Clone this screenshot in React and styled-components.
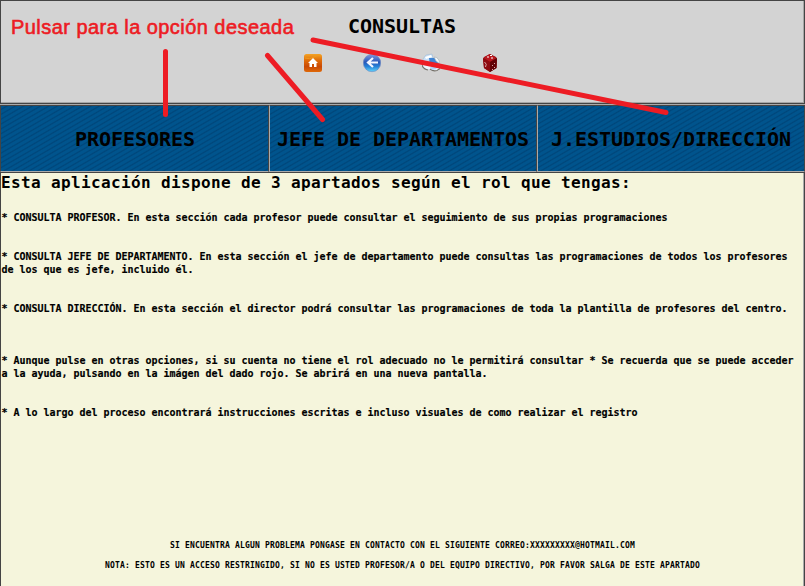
import React from "react";
import styled, { createGlobalStyle } from "styled-components";

const GlobalStyle = createGlobalStyle`
  * { box-sizing: border-box; }
  body { margin: 0; overflow: hidden; background: #f5f5dc; }
`;

const Page = styled.div`
  position: relative;
  width: 805px;
  height: 586px;
  display: flex;
  flex-direction: column;
  overflow: hidden;
  color: #000;
  font-family: "DejaVu Sans Mono", monospace;
  font-weight: 700;
`;

const Header = styled.header`
  height: 104px;
  flex: none;
  display: flex;
  flex-direction: column;
  align-items: center;
  background: #d3d3d3;
  border: 1px solid #444;
  box-shadow: inset -1px -1px #a6a6a6;
`;

const Title = styled.h1`
  margin: 13px 0 0;
  padding-right: 1px;
  font-size: 20px;
  line-height: 24px;
  letter-spacing: -0.04px;
`;

const Toolbar = styled.nav`
  display: flex;
  gap: 41px;
  margin-top: 15px;
  height: 20px;
  padding-right: 3px;
`;

const Icon = styled.svg`
  display: block;
  width: 18px;
  height: 20px;
`;

const Tabs = styled.nav`
  flex: none;
  height: 68px;
  display: grid;
  grid-template-columns: 269px 268px 268px;
  border-top: 1px solid #aaa;
`;

const Tab = styled.a`
  display: flex;
  align-items: center;
  justify-content: center;
  padding-left: ${(p) => (p.$first ? "1px" : "0")};
  white-space: nowrap;
  font-size: 20px;
  letter-spacing: -0.04px;
  border: 1px solid #444;
  border-left-color: ${(p) => (p.$first ? "#444" : "#aaa")};
  border-bottom-color: #aaa;
  background: repeating-linear-gradient(150deg, #00548d 0 1.8px, #00467a 3px, #00548d 4.2px);
`;

const Content = styled.main`
  flex: 1;
  display: flex;
  flex-direction: column;
  background: #f5f5dc;
  border: solid #444;
  border-width: 1px 1px 0;
  box-shadow: inset -1px 0 #aaa;
`;

const Intro = styled.h2`
  margin: 0;
  font-size: 16px;
  line-height: 19px;
  letter-spacing: 0.368px;
`;

const Notes = styled.section`
  padding: 19px 0 0 0.5px;
  font-size: 10px;
  line-height: 13px;
  letter-spacing: -0.02px;
  -webkit-text-stroke: 0.15px #000;
`;

const Note = styled.p`
  margin: 0 0 ${(p) => p.$gap || 26}px;
`;

const Footer = styled.footer`
  margin-top: auto;
  padding-bottom: 10px;
  text-align: center;
  font-size: 8px;
  line-height: 20px;
  letter-spacing: 0.184px;
`;

const FootLine = styled.div`
  white-space: nowrap;
`;

const Annotation = styled.div`
  position: absolute;
  left: 11px;
  top: 15px;
  color: #ed1c24;
  font: 400 20px/24px "Liberation Sans", Arial, sans-serif;
  letter-spacing: 0.45px;
  -webkit-text-stroke: 0.6px #ed1c24;
  white-space: nowrap;
`;

const Pointers = styled.svg`
  position: absolute;
  inset: 0;
  pointer-events: none;
`;

const HomeIcon = () => (
  <Icon viewBox="0 0 18 20">
    <defs>
      <linearGradient id="home" x2="0" y2="1">
        <stop stopColor="#f3a326" /><stop offset=".35" stopColor="#e06c08" />
        <stop offset=".7" stopColor="#c94905" /><stop offset="1" stopColor="#df6908" />
      </linearGradient>
    </defs>
    <rect y="1" width="18" height="18" rx="2.5" fill="url(#home)" />
    <path d="M1 5q5 2 9-1t7-1" stroke="#ef9a1c" fill="none" />
    <path d="m9 5-5 5h1.500v4H8v-3h2v3h2.500v-4H14z" fill="#fff" />
  </Icon>
);

const BackIcon = () => (
  <Icon viewBox="0 0 18 20">
    <defs>
      <linearGradient id="back" x2="0" y2="1">
        <stop stopColor="#8299dc" /><stop offset=".45" stopColor="#2858b9" />
        <stop offset=".7" stopColor="#2582d8" /><stop offset="1" stopColor="#5fd4fc" />
      </linearGradient>
    </defs>
    <circle cx="9" cy="10" r="8.7" fill="url(#back)" stroke="#7187bd" strokeWidth=".6" />
    <path d="M10 5 5 9.500l5 4.500M5.500 9.500H15" fill="none" stroke="#f4f7ff" strokeWidth="2.2" />
  </Icon>
);

const ReloadIcon = () => (
  <Icon viewBox="0 0 18 20">
    <path d="M1 6 4 2l6-1 1 4-4 3-6 1z" fill="#c7dff8" stroke="#a5bad0" strokeWidth=".6" />
    <path d="m3 4 6-2 1 2-6 2z" fill="#fff" />
    <path d="M7 5h6l4 5v3l-9-1z" fill="#3f83d3" />
    <path d="M12 4q5 0 6 7l-4-3z" fill="#f2f6fa" stroke="#a5acb1" strokeWidth=".6" />
    <path d="M1 12v3l4 2 2-1 3 2h6l2-3-3-3H6z" fill="#eef6ff" />
    <path d="M0 12q1 4 6 5M8 16q3 2.500 7 1.500l3-2" fill="none" stroke="#77726a" strokeWidth="1.2" />
    <path d="M8 14h5l2 2-5 1z" fill="#b0d4fb" />
  </Icon>
);

const DieIcon = () => (
  <Icon viewBox="0 0 16 20">
    <path d="m2 4 6-3 6 3 1 2-.5 9L8 19l-6-4L1 6z" fill="#8c0b10" />
    <path d="m1.500 5 6-4 7 4-6.500 4z" fill="#b8171e" />
    <path d="m8 9 7-4-.5 10L8 19z" fill="#620307" />
    <path d="m1 5 7 4v10l-6-4z" fill="#8e0a10" />
    <path d="M5 4h2M8 2.500h2M9 5h2" stroke="#fff" strokeWidth="1.2" />
    <path d="M2.500 9q3 2 1 5M10.500 12v1m2-3v1m-2 5v1m2-3v1" fill="none" stroke="#d9aaab" />
  </Icon>
);

export default function App() {
  return (
    <Page>
      <GlobalStyle />
      <Header>
        <Title>CONSULTAS</Title>
        <Toolbar>
          <HomeIcon />
          <BackIcon />
          <ReloadIcon />
          <DieIcon />
        </Toolbar>
      </Header>
      <Tabs>
        <Tab $first>PROFESORES</Tab>
        <Tab>JEFE DE DEPARTAMENTOS</Tab>
        <Tab>J.ESTUDIOS/DIRECCIÓN</Tab>
      </Tabs>
      <Content>
        <Intro>Esta aplicación dispone de 3 apartados según el rol que tengas:</Intro>
        <Notes>
          <Note>* CONSULTA PROFESOR. En esta sección cada profesor puede consultar el seguimiento de sus propias programaciones</Note>
          <Note>* CONSULTA JEFE DE DEPARTAMENTO. En esta sección el jefe de departamento puede consultas las programaciones de todos los profesores de los que es jefe, incluido él.</Note>
          <Note $gap={39}>* CONSULTA DIRECCIÓN. En esta sección el director podrá consultar las programaciones de toda la plantilla de profesores del centro.</Note>
          <Note>* Aunque pulse en otras opciones, si su cuenta no tiene el rol adecuado no le permitirá consultar * Se recuerda que se puede acceder a la ayuda, pulsando en la imágen del dado rojo. Se abrirá en una nueva pantalla.</Note>
          <Note>* A lo largo del proceso encontrará instrucciones escritas e incluso visuales de como realizar el registro</Note>
        </Notes>
        <Footer>
          <FootLine>SI ENCUENTRA ALGUN PROBLEMA PONGASE EN CONTACTO CON EL SIGUIENTE CORREO:XXXXXXXXX@HOTMAIL.COM</FootLine>
          <FootLine>NOTA: ESTO ES UN ACCESO RESTRINGIDO, SI NO ES USTED PROFESOR/A O DEL EQUIPO DIRECTIVO, POR FAVOR SALGA DE ESTE APARTADO</FootLine>
        </Footer>
      </Content>
      <Annotation>Pulsar para la opción deseada</Annotation>
      <Pointers width="805" height="586" fill="none" stroke="#ed1c24" strokeWidth="5" strokeLinecap="round">
        <path d="M165.500 51.500v63M267.500 55.500l55 64M313 40l353 72.500" />
      </Pointers>
    </Page>
  );
}
